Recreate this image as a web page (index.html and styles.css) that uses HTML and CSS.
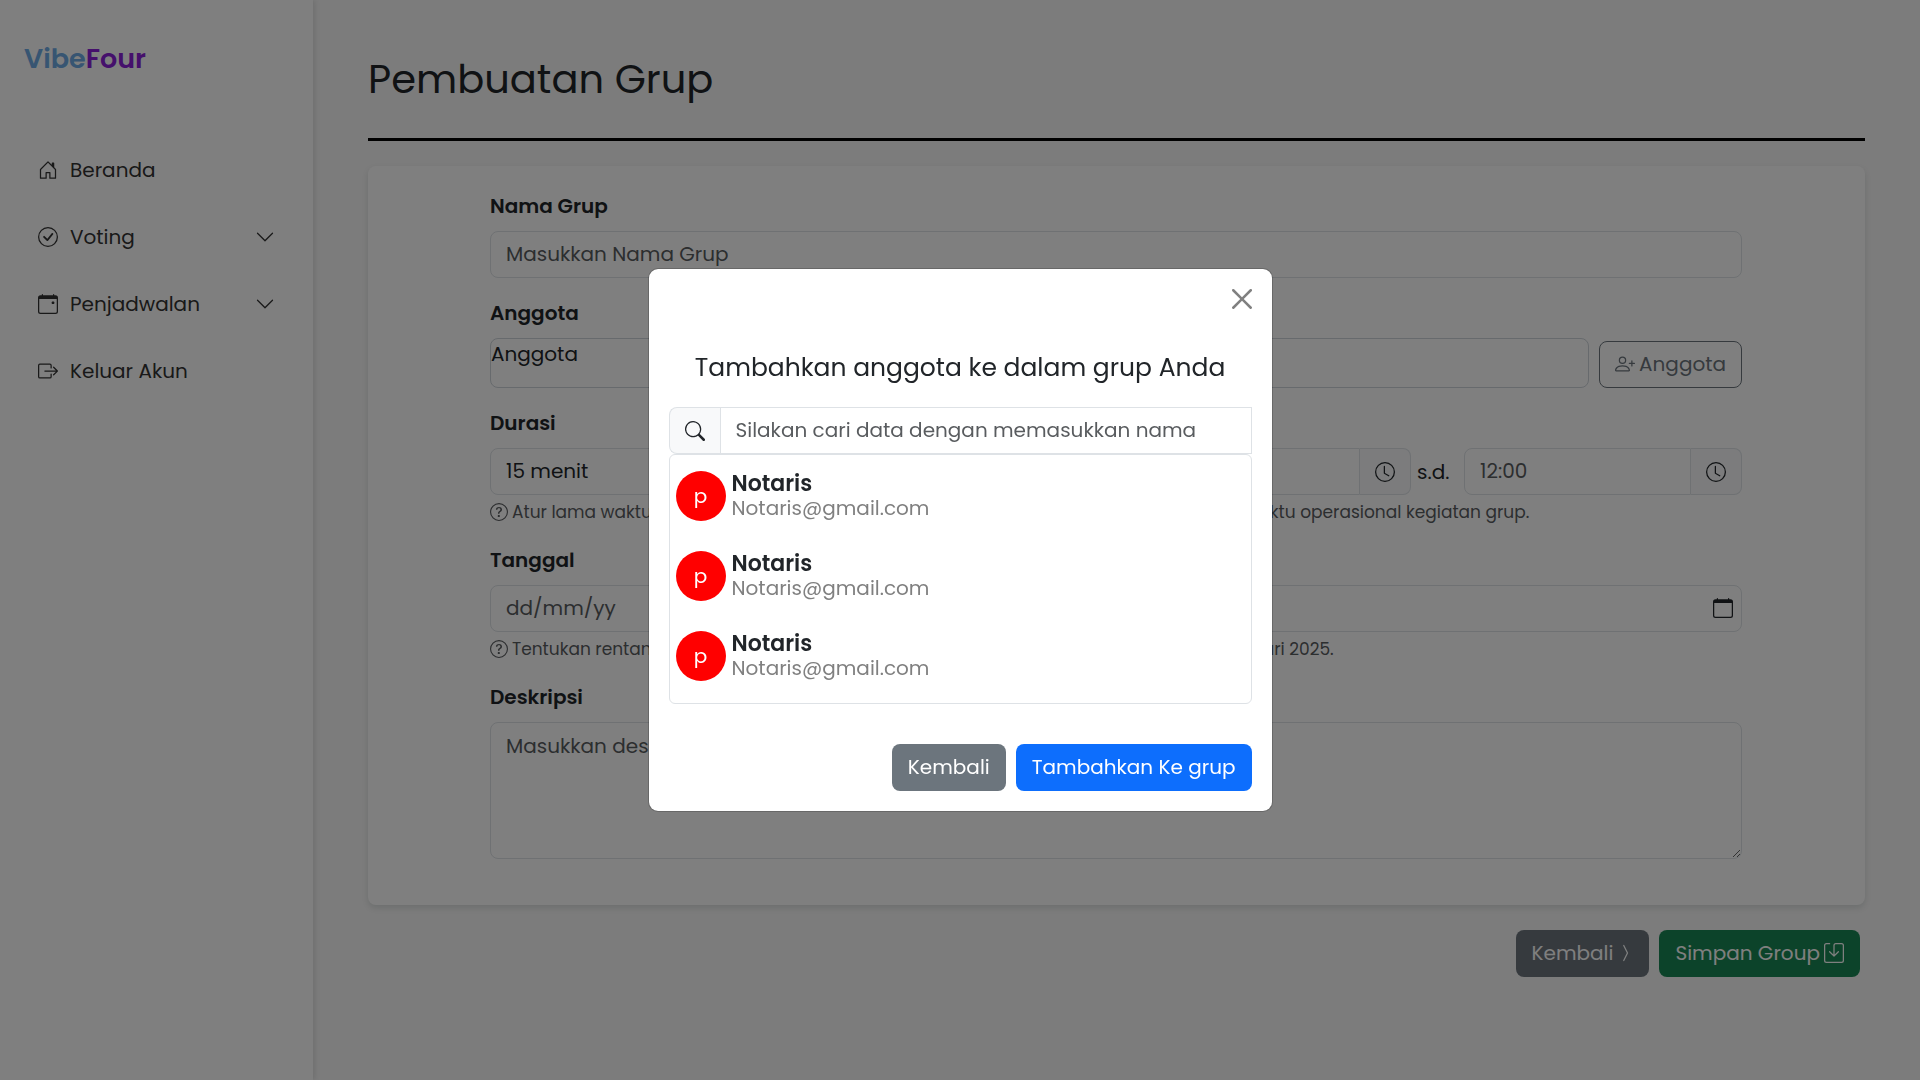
FILE: index.html
```html
<!DOCTYPE html>
<html lang="id">
<head>
  <meta charset="utf-8">
  <meta name="viewport" content="width=device-width, initial-scale=1">
  <title>VibeFour - Pembuatan Grup</title>
  <link rel="stylesheet" href="styles.css">
</head>
<body>
  <svg class="sprite" aria-hidden="true">
    <symbol id="i-house" viewBox="0 0 16 16"><path d="M8.354 1.146a.5.5 0 0 0-.708 0l-6 6A.5.5 0 0 0 1.500 7.500v7a.5.5 0 0 0 .5.5h4.500a.5.5 0 0 0 .5-.5v-4h2v4a.5.5 0 0 0 .5.5H14a.5.5 0 0 0 .5-.5v-7a.5.5 0 0 0-.146-.354L13 5.793V2.500a.5.5 0 0 0-.5-.5h-1a.5.5 0 0 0-.5.5v1.293zM2.500 14V7.707l5.500-5.500 5.500 5.500V14H10v-4a.5.5 0 0 0-.5-.5h-3a.5.5 0 0 0-.5.5v4z"/></symbol>
    <symbol id="i-check" viewBox="0 0 16 16"><path d="M8 15A7 7 0 1 1 8 1a7 7 0 0 1 0 14m0 1A8 8 0 1 0 8 0a8 8 0 0 0 0 16"/><path d="m10.970 4.970-.02.022-3.473 4.425-2.093-2.094a.75.75 0 0 0-1.060 1.060L6.970 11.030a.75.75 0 0 0 1.079-.02l3.992-4.990a.75.75 0 0 0-1.071-1.050"/></symbol>
    <symbol id="i-calendar" viewBox="0 0 16 16"><path d="M3.500 0a.5.5 0 0 1 .5.5V1h8V.5a.5.5 0 0 1 1 0V1h1a2 2 0 0 1 2 2v11a2 2 0 0 1-2 2H2a2 2 0 0 1-2-2V3a2 2 0 0 1 2-2h1V.5a.5.5 0 0 1 .5-.5M1 4v10a1 1 0 0 0 1 1h12a1 1 0 0 0 1-1V4z"/></symbol>
    <symbol id="i-event" viewBox="0 0 16 16"><path d="M11 6.500a.5.5 0 0 1 .5-.5h1a.5.5 0 0 1 .5.5v1a.5.5 0 0 1-.5.5h-1a.5.5 0 0 1-.5-.5z"/><path d="M3.500 0a.5.5 0 0 1 .5.5V1h8V.5a.5.5 0 0 1 1 0V1h1a2 2 0 0 1 2 2v11a2 2 0 0 1-2 2H2a2 2 0 0 1-2-2V3a2 2 0 0 1 2-2h1V.5a.5.5 0 0 1 .5-.5M1 4v10a1 1 0 0 0 1 1h12a1 1 0 0 0 1-1V4z"/></symbol>
    <symbol id="i-exit" viewBox="0 0 16 16"><path d="M10 12.500a.5.5 0 0 1-.5.5h-8a.5.5 0 0 1-.5-.5v-9a.5.5 0 0 1 .5-.5h8a.5.5 0 0 1 .5.5v2a.5.5 0 0 0 1 0v-2A1.500 1.500 0 0 0 9.500 2h-8A1.500 1.500 0 0 0 0 3.500v9A1.500 1.500 0 0 0 1.500 14h8a1.500 1.500 0 0 0 1.500-1.500v-2a.5.5 0 0 0-1 0z"/><path d="M15.854 8.354a.5.5 0 0 0 0-.708l-3-3a.5.5 0 0 0-.708.708L14.293 7.500H5.500a.5.5 0 0 0 0 1h8.793l-2.147 2.146a.5.5 0 0 0 .708.708z"/></symbol>
    <symbol id="i-down" viewBox="0 0 16 16"><path d="M1.646 4.646a.5.5 0 0 1 .708 0L8 10.293l5.646-5.647a.5.5 0 0 1 .708.708l-6 6a.5.5 0 0 1-.708 0l-6-6a.5.5 0 0 1 0-.708"/></symbol>
    <symbol id="i-search" viewBox="0 0 16 16"><path d="M11.742 10.344a6.500 6.500 0 1 0-1.397 1.398h-.001q.044.06.098.115l3.850 3.850a1 1 0 0 0 1.415-1.414l-3.850-3.850a1 1 0 0 0-.115-.1zM12 6.500a5.500 5.500 0 1 1-11 0 5.500 5.500 0 0 1 11 0"/></symbol>
    <symbol id="i-clock" viewBox="0 0 16 16"><path d="M8 3.500a.5.5 0 0 0-1 0V9a.5.5 0 0 0 .252.434l3.500 2a.5.5 0 0 0 .496-.868L8 8.710z"/><path d="M8 16A8 8 0 1 0 8 0a8 8 0 0 0 0 16m7-8A7 7 0 1 1 1 8a7 7 0 0 1 14 0"/></symbol>
    <symbol id="i-help" viewBox="0 0 16 16"><path d="M8 15A7 7 0 1 1 8 1a7 7 0 0 1 0 14m0 1A8 8 0 1 0 8 0a8 8 0 0 0 0 16"/><path d="M5.255 5.786a.237.237 0 0 0 .241.247h.825c.138 0 .248-.113.266-.25.09-.656.54-1.134 1.342-1.134.686 0 1.314.343 1.314 1.168 0 .635-.374.927-.965 1.371-.673.489-1.206 1.060-1.168 1.987l.003.217a.25.25 0 0 0 .25.246h.811a.25.25 0 0 0 .25-.25v-.105c0-.718.273-.927 1.010-1.486.609-.463 1.244-.977 1.244-2.056 0-1.511-1.276-2.241-2.673-2.241-1.267 0-2.655.59-2.750 2.286m1.557 5.763c0 .533.425.927 1.010.927.609 0 1.028-.394 1.028-.927 0-.552-.42-.94-1.029-.94-.584 0-1.009.388-1.009.94"/></symbol>
    <symbol id="i-person" viewBox="0 0 16 16"><path d="M6 8a3 3 0 1 0 0-6 3 3 0 0 0 0 6m2-3a2 2 0 1 1-4 0 2 2 0 0 1 4 0m4 8c0 1-1 1-1 1H1s-1 0-1-1 1-4 6-4 6 3 6 4m-1-.004c-.001-.246-.154-.986-.832-1.664C9.516 10.680 8.289 10 6 10s-3.516.68-4.168 1.332c-.678.678-.83 1.418-.832 1.664z"/><path d="M13.500 5a.5.5 0 0 1 .5.5V7h1.500a.5.5 0 0 1 0 1H14v1.500a.5.5 0 0 1-1 0V8h-1.500a.5.5 0 0 1 0-1H13V5.500a.5.5 0 0 1 .5-.5"/></symbol>
    <symbol id="i-save" viewBox="0 0 16 16"><path d="M2 1a1 1 0 0 0-1 1v12a1 1 0 0 0 1 1h12a1 1 0 0 0 1-1V2a1 1 0 0 0-1-1H9.500a1 1 0 0 0-1 1v7.293l2.646-2.647a.5.5 0 0 1 .708.708l-3.500 3.500a.5.5 0 0 1-.708 0l-3.500-3.500a.5.5 0 1 1 .708-.708L7.500 9.293V2a2 2 0 0 1 2-2H14a2 2 0 0 1 2 2v12a2 2 0 0 1-2 2H2a2 2 0 0 1-2-2V2a2 2 0 0 1 2-2h2.500a.5.5 0 0 1 0 1z"/></symbol>
    <symbol id="i-right" viewBox="4 0 8 16"><path d="M6.776 1.553a.5.5 0 0 1 .671.223l3 6a.5.5 0 0 1 0 .448l-3 6a.5.5 0 1 1-.894-.448L9.440 8 6.553 2.224a.5.5 0 0 1 .223-.671"/></symbol>
    <symbol id="i-close" viewBox="0 0 16 16"><path d="M.293.293a1 1 0 0 1 1.414 0L8 6.586 14.293.293a1 1 0 1 1 1.414 1.414L9.414 8l6.293 6.293a1 1 0 0 1-1.414 1.414L8 9.414l-6.293 6.293a1 1 0 0 1-1.414-1.414L6.586 8 .293 1.707a1 1 0 0 1 0-1.414z"/></symbol>
  </svg>

  <div class="layout">
    <aside class="sidebar">
      <a class="brand" href="#">Vibe<span class="brand-accent">Four</span></a>
      <nav class="menu">
        <a class="menu-item" href="#"><svg class="icon"><use href="#i-house"/></svg>Beranda</a>
        <a class="menu-item" href="#"><svg class="icon"><use href="#i-check"/></svg>Voting<svg class="icon caret"><use href="#i-down"/></svg></a>
        <a class="menu-item" href="#"><svg class="icon"><use href="#i-event"/></svg>Penjadwalan<svg class="icon caret"><use href="#i-down"/></svg></a>
        <a class="menu-item" href="#"><svg class="icon"><use href="#i-exit"/></svg>Keluar Akun</a>
      </nav>
    </aside>

    <main class="content">
      <h1 class="page-title">Pembuatan Grup</h1>
      <form>
        <div class="card">
          <div class="field">
            <label class="label" for="nama">Nama Grup</label>
            <input class="control" id="nama" type="text" placeholder="Masukkan Nama Grup">
          </div>

          <div class="field">
            <span class="label">Anggota</span>
            <div class="row members">
              <div class="member-box">Anggota</div>
              <button class="btn btn-outline" type="button"><svg class="icon"><use href="#i-person"/></svg>Anggota</button>
            </div>
          </div>

          <div class="field">
            <label class="label" for="durasi">Durasi</label>
            <div class="row durations">
              <select class="control" id="durasi"><option>15 menit</option></select>
              <div class="group">
                <input class="control" type="text" placeholder="08:00" aria-label="Jam mulai">
                <span class="addon"><svg class="icon"><use href="#i-clock"/></svg></span>
              </div>
              <span class="until">s.d.</span>
              <div class="group">
                <input class="control" type="text" placeholder="12:00" aria-label="Jam selesai">
                <span class="addon"><svg class="icon"><use href="#i-clock"/></svg></span>
              </div>
            </div>
            <div class="help-row">
              <p class="help"><svg class="icon help-icon"><use href="#i-help"/></svg>Atur lama waktu kegiatan.</p>
              <p class="help"><svg class="icon help-icon"><use href="#i-help"/></svg>Tentukan waktu operasional kegiatan grup.</p>
            </div>
          </div>

          <div class="field">
            <label class="label" for="tanggal">Tanggal</label>
            <div class="control date-box">
              <input class="date-input" id="tanggal" type="text" placeholder="dd/mm/yy">
              <svg class="icon"><use href="#i-calendar"/></svg>
            </div>
            <p class="help"><svg class="icon help-icon"><use href="#i-help"/></svg>Tentukan rentang tanggal operasional kegiatan grup. Contoh: 1 Januari 2025 s.d. 31 Januari 2025.</p>
          </div>

          <div class="field">
            <label class="label" for="deskripsi">Deskripsi</label>
            <textarea class="control description" id="deskripsi" placeholder="Masukkan deskripsi"></textarea>
          </div>
        </div>

        <div class="actions page-actions">
          <button class="btn btn-secondary" type="button">Kembali<svg class="icon arrow"><use href="#i-right"/></svg></button>
          <button class="btn btn-success" type="submit">Simpan Group<svg class="icon"><use href="#i-save"/></svg></button>
        </div>
      </form>
    </main>
  </div>

  <div class="backdrop">
    <section class="modal" role="dialog" aria-modal="true" aria-labelledby="modal-title">
      <button class="close" type="button" aria-label="Tutup"><svg class="icon"><use href="#i-close"/></svg></button>
      <h2 class="modal-title" id="modal-title">Tambahkan anggota ke dalam grup Anda</h2>
      <div class="group search">
        <label class="addon search-addon" for="cari"><svg class="icon"><use href="#i-search"/></svg></label>
        <input class="control" id="cari" type="text" placeholder="Silakan cari data dengan memasukkan nama">
      </div>
      <ul class="people">
        <li class="person"><span class="avatar">p</span><div><strong class="name">Notaris</strong><span class="email">Notaris@gmail.com</span></div></li>
        <li class="person"><span class="avatar">p</span><div><strong class="name">Notaris</strong><span class="email">Notaris@gmail.com</span></div></li>
        <li class="person"><span class="avatar">p</span><div><strong class="name">Notaris</strong><span class="email">Notaris@gmail.com</span></div></li>
      </ul>
      <div class="actions">
        <button class="btn btn-secondary" type="button">Kembali</button>
        <button class="btn btn-primary" type="button">Tambahkan Ke grup</button>
      </div>
    </section>
  </div>
</body>
</html>
```
FILE: styles.css
```css
* {
  box-sizing: border-box;
}

body {
  margin: 0;
  background: #f8f8f8;
  color: #212529;
  font-family: Poppins, Inter, "Noto Sans", sans-serif;
  font-size: 20px;
  line-height: 30px;
}

h1,
h2,
p,
ul {
  margin: 0;
  padding: 0;
  font-weight: 400;
}

input,
select,
textarea,
button {
  font: inherit;
  color: inherit;
}

.sprite {
  display: none;
}

.icon {
  width: 20px;
  height: 20px;
  flex: none;
  fill: currentColor;
}

.layout {
  display: flex;
  min-height: 100vh;
}

/* Sidebar */
.sidebar {
  flex: 0 0 313px;
  padding: 37px 24px;
  background: #fff;
  box-shadow: 2px 0 5px rgba(0, 0, 0, 0.1);
}

.brand {
  display: block;
  color: #6eaae4;
  font-size: 27px;
  font-weight: 600;
  line-height: 44px;
  text-decoration: none;
}

.brand-accent {
  color: #8a20d8;
}

.menu {
  display: grid;
  gap: 20px;
  margin-top: 65px;
}

.menu-item {
  display: flex;
  align-items: center;
  gap: 12px;
  height: 47px;
  padding: 0 14px;
  color: #333;
  text-decoration: none;
}

.caret {
  margin-left: auto;
}

/* Page */
.content {
  flex: 1;
  min-width: 0;
  padding: 49px 55px;
}

.page-title {
  margin-bottom: 25px;
  padding-bottom: 29px;
  border-bottom: 3px solid #000;
  font-size: 40px;
  line-height: 60px;
}

.card {
  display: grid;
  gap: 20px;
  padding: 25px 123px 46px 122px;
  border-radius: 8px;
  background: #fff;
  box-shadow: 0 3px 6px rgba(0, 40, 30, 0.12);
}

.label {
  display: block;
  margin-bottom: 10px;
  font-weight: 600;
}

.control {
  display: block;
  width: 100%;
  height: 47px;
  padding: 0 15px 2px;
  border: 1px solid #dee2e6;
  border-radius: 8px;
  outline: 0;
  background: #fff;
  appearance: none;
}

::placeholder {
  color: #595c5f;
  opacity: 1;
}

.row {
  display: flex;
  gap: 10px;
}

.members {
  align-items: flex-end;
}

.member-box {
  flex: 1;
  height: 50px;
  border: 1px solid #ced4da;
  border-radius: 8px;
}

.durations {
  display: grid;
  grid-template-columns: 1fr 278px 33px 278px;
  align-items: center;
}

.group {
  display: flex;
}

.group .control {
  flex: 1;
  min-width: 0;
  border-radius: 8px 0 0 8px;
}

.addon {
  display: flex;
  align-items: center;
  justify-content: center;
  width: 51px;
  border: 1px solid #dee2e6;
  border-left: 0;
  border-radius: 0 8px 8px 0;
  background: #f8f9fa;
}

.until {
  margin-left: -4px;
}

.help {
  display: flex;
  align-items: center;
  gap: 4px;
  margin-top: 4px;
  color: #595c5f;
  font-size: 17px;
  line-height: 26px;
}

.help-row {
  display: grid;
  grid-template-columns: 1fr 603px;
  gap: 10px;
}

.help-icon {
  width: 18px;
  height: 18px;
}

.date-box {
  display: flex;
  align-items: center;
  padding: 0 8px 2px 15px;
}

.date-input {
  flex: 1;
  padding: 0;
  border: 0;
  outline: 0;
}

.description {
  height: 137px;
  padding: 8px 15px;
  resize: vertical;
}

/* Buttons */
.btn {
  display: flex;
  align-items: center;
  gap: 4px;
  height: 47px;
  padding: 0 15px 2px;
  border: 1px solid transparent;
  border-radius: 8px;
  color: #fff;
  cursor: pointer;
}

.btn-outline {
  border-color: #6c757d;
  background: transparent;
  color: #6c757d;
}

.btn-secondary {
  background: #6c757d;
}

.btn-success {
  background: #198754;
}

.btn-primary {
  background: #0d6efd;
}

.arrow {
  width: 16px;
}

.actions {
  display: flex;
  justify-content: flex-end;
  gap: 10px;
}

.page-actions {
  padding: 25px 5px;
}

/* Dialog */
.backdrop {
  position: fixed;
  inset: 0;
  display: flex;
  align-items: center;
  justify-content: center;
  background: rgba(0, 0, 0, 0.5);
}

.modal {
  width: 625px;
  padding: 20px;
  border: 1px solid rgba(0, 0, 0, 0.18);
  border-radius: 10px;
  background: #fff;
  background-clip: padding-box;
}

.close {
  display: block;
  margin: 0 0 0 auto;
  padding: 0;
  border: 0;
  background: none;
  color: #808080;
  line-height: 0;
  cursor: pointer;
}

.modal-title {
  margin: 39px 0 19px;
  font-size: 25px;
  line-height: 40px;
  text-align: center;
}

.search .control {
  border-radius: 0;
}

.search-addon {
  border-right: 0;
  border-left: 1px solid #dee2e6;
  border-radius: 8px 0 0 8px;
}

.people {
  display: grid;
  gap: 30px;
  margin-bottom: 40px;
  padding: 16px 6px 22px;
  border: 1px solid #dee2e6;
  border-radius: 6px;
  list-style: none;
}

.person {
  display: flex;
  align-items: center;
  gap: 6px;
}

.avatar {
  display: flex;
  align-items: center;
  justify-content: center;
  width: 50px;
  height: 50px;
  border-radius: 50%;
  background: #f00;
  color: #fff;
}

.name,
.email {
  display: block;
  line-height: 25px;
}

.name {
  font-size: 22px;
  font-weight: 600;
}

.email {
  color: #808080;
}
```
